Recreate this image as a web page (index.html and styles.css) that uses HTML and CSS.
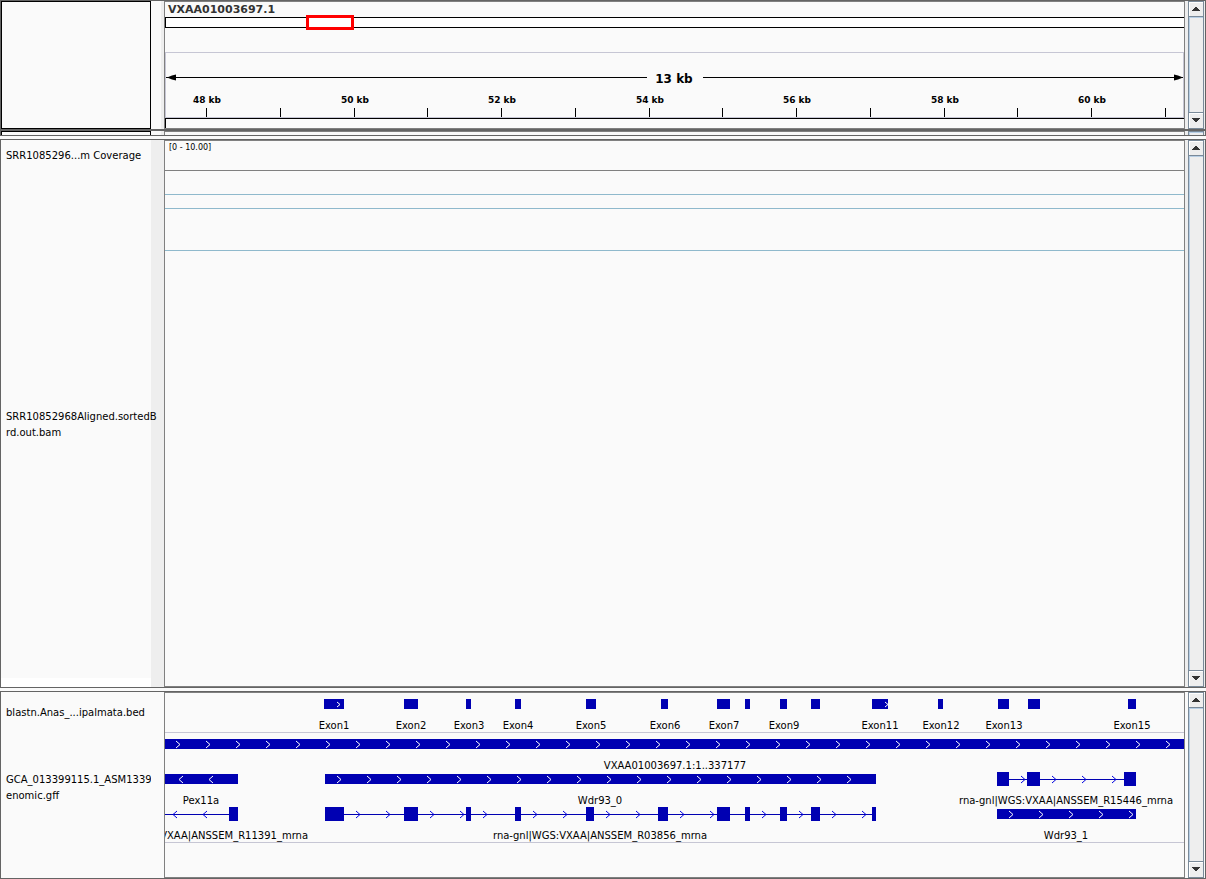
FILE: index.html
```html
<!DOCTYPE html>
<html lang="en">
<head>
<meta charset="utf-8">
<title>Genome viewer</title>
<link rel="stylesheet" href="styles.css">
</head>
<body>
<main class="viewer">
  <section class="panel header-panel">
    <div class="names boxed"></div>
    <div class="attributes narrow"></div>
    <div class="data">
      <div class="locus">VXAA01003697.1</div>
      <div class="ideogram"><div class="region"></div></div>
      <svg class="ruler" id="ruler"></svg>
      <div class="sequence"></div>
    </div>
    <div class="scrollbar">
      <button class="arrow" type="button" aria-label="Scroll up"><svg width="8" height="4"><path d="M3 0h2v1h1v1h1v1h1v1H0V3h1V2h1V1h1z"/></svg></button>
      <div class="rail"></div>
      <button class="arrow down" type="button" aria-label="Scroll down"><svg width="8" height="4"><path d="M0 0h8v1H7v1H6v1H5v1H3V3H2V2H1V1H0z"/></svg></button>
    </div>
  </section>
  <section class="panel sliver">
    <div class="names boxed"></div>
    <div class="attributes narrow"></div>
    <div class="data"></div>
    <div class="scrollbar"><div class="rail"></div></div>
  </section>
  <section class="panel reads-panel">
    <div class="names wide-text">
      <div class="name coverage">SRR1085296...m Coverage</div>
      <div class="name alignment">SRR10852968Aligned.sortedB<br>rd.out.bam</div>
      <div class="name-end"></div>
    </div>
    <div class="attributes"></div>
    <div class="data">
      <div class="coverage range">[0 - 10.00]</div>
      <div class="alignment splices">
        <div class="splice first"></div>
        <div class="splice second"></div>
        <div class="splice third"></div>
      </div>
    </div>
    <div class="scrollbar">
      <button class="arrow" type="button" aria-label="Scroll up"><svg width="8" height="4"><path d="M3 0h2v1h1v1h1v1h1v1H0V3h1V2h1V1h1z"/></svg></button>
      <div class="rail"></div>
      <button class="arrow down" type="button" aria-label="Scroll down"><svg width="8" height="4"><path d="M0 0h8v1H7v1H6v1H5v1H3V3H2V2H1V1H0z"/></svg></button>
    </div>
  </section>
  <section class="panel features-panel">
    <div class="names">
      <div class="name exons">blastn.Anas_...ipalmata.bed</div>
      <div class="name genes">GCA_013399115.1_ASM13399<br>enomic.gff</div>
    </div>
    <div class="attributes plain"></div>
    <div class="data">
      <svg class="track exons" id="exons"></svg>
      <svg class="track genes" id="genes"></svg>
    </div>
    <div class="scrollbar">
      <button class="arrow" type="button" aria-label="Scroll up"><svg width="8" height="4"><path d="M3 0h2v1h1v1h1v1h1v1H0V3h1V2h1V1h1z"/></svg></button>
      <div class="rail"></div>
      <button class="arrow down" type="button" aria-label="Scroll down"><svg width="8" height="4"><path d="M0 0h8v1H7v1H6v1H5v1H3V3H2V2H1V1H0z"/></svg></button>
    </div>
  </section>
</main>
<script src="tracks.js"></script>
</body>
</html>
```

FILE: styles.css
```css
* { box-sizing: border-box; }

body {
  margin: 0;
  background: #fafafa;
  color: #000;
  font: 10px/16px "DejaVu Sans", Verdana, sans-serif;
}

.viewer {
  display: flex;
  flex-direction: column;
  min-height: 100vh;
}

.panel {
  display: grid;
  grid-template-columns: 150px 13px minmax(0, 1fr) 17px;
  border: 1px solid #646464;
}

.sliver { height: 6px; }
.reads-panel { flex: 1; margin: 3px 0; }
.features-panel { height: 188px; }

.names {
  display: flex;
  flex-direction: column;
  padding-top: 1px;
  overflow: hidden;
}

.names.wide-text {
  z-index: 1;
  overflow: visible;
  background: #fafafa;
}

.boxed { border: 1px solid #000; }
.sliver .boxed { border-bottom: 0; }

.name {
  display: flex;
  flex-direction: column;
  justify-content: center;
  padding-left: 5px;
  white-space: nowrap;
}

.name br { display: block; }
.name-end { height: 9px; background: #fff; }

.attributes { background: #eee; }
.attributes.narrow { border-left: 10px solid #fafafa; }
.attributes.plain { background: none; }

.data {
  display: flex;
  flex-direction: column;
  min-width: 0;
  margin-right: 3px;
  border: 1px solid #808080;
}

.sliver .data { border-bottom: 0; }

.header-panel, .sliver, .reads-panel {
  background: linear-gradient(#eee, #eee) right / 24px 100% no-repeat;
}

.header-panel .data, .sliver .data, .reads-panel .data { background: #fafafa; }

.locus {
  height: 15px;
  padding-left: 3px;
  font-size: 11px;
  font-weight: bold;
  line-height: 15px;
  color: #333;
}

.ideogram {
  position: relative;
  height: 11px;
  border: 1px solid #000;
  border-right: 0;
  background: #fff;
}

.region {
  position: absolute;
  top: -3px;
  left: 13.8%;
  width: 48px;
  height: 15px;
  border: 3px solid #f00;
}

.ruler {
  width: 100%;
  height: 66px;
  margin-top: 24px;
  border: 1px solid #c6c6d4;
  font-size: 9px;
  font-weight: bold;
}

.ruler .span { font-size: 12px; }

.sequence {
  height: 10px;
  border-top: 1px solid #000;
  border-left: 1px solid #000;
}

.coverage { height: 30px; }

.range {
  padding-left: 4px;
  border-bottom: 1px solid #808080;
  font-size: 8px;
  line-height: 13px;
}

.alignment { flex: 1; }
.splices { padding-top: 23px; }
.splice { border-top: 1px solid #8fb9cc; }
.splice.first { height: 14px; }
.splice.second { height: 42px; }

.track {
  display: block;
  width: 100%;
  border-bottom: 1px solid #c6c6d4;
}

.exons { height: 40px; }
.genes { height: 110px; }

svg text { text-anchor: middle; }
.block { fill: #0000b2; }
.chevron { fill: none; stroke: #0000e0; }
.chevron.on-block { stroke: #fff; }

.scrollbar {
  display: flex;
  flex-direction: column;
  border: 1px solid #7a8a99;
  border-bottom: 0;
  margin-right: 1px;
  background: #eee;
}

.arrow {
  display: flex;
  align-items: center;
  justify-content: center;
  height: 15px;
  padding: 0;
  border: 0;
  border-bottom: 1px solid #7a8a99;
  background: #eee;
  box-shadow: inset 1px 1px #fff;
}

.arrow.down {
  height: 17px;
  padding-bottom: 2px;
  border-top: 1px solid #7a8a99;
}

.arrow svg { fill: #333; }

.rail {
  flex: 1;
  border-top: 1px solid #b8cfe5;
  border-left: 1px solid #b8cfe5;
}
```

FILE: tracks.js
```js
const NS = "http://www.w3.org/2000/svg";
const VIEW = 1019;

const exonBlocks = [
  [159, 20], [239, 14], [301, 5], [350, 6], [421, 10], [496, 7], [552, 13], [580, 5],
  [615, 7], [646, 9], [707, 16], [773, 5], [833, 11], [863, 12], [963, 8]
];
const exonLabels = [
  ["Exon1", 169], ["Exon2", 246], ["Exon3", 304], ["Exon4", 353], ["Exon5", 426],
  ["Exon6", 500], ["Exon7", 559], ["Exon9", 619], ["Exon11", 715], ["Exon12", 776],
  ["Exon13", 839], ["Exon15", 967]
];
const wdr93Exons = [
  [160, 19], [239, 14], [301, 5], [350, 6], [421, 8], [493, 10], [552, 13], [580, 5],
  [615, 7], [646, 9], [707, 4]
];

function painter(id) {
  const svg = document.getElementById(id);
  svg.replaceChildren();
  const scale = svg.parentElement.clientWidth / VIEW;
  const px = v => Math.round(v * scale);
  const add = (tag, attrs, text) => {
    const node = document.createElementNS(NS, tag);
    for (const key in attrs) node.setAttribute(key, attrs[key]);
    if (text) node.textContent = text;
    svg.append(node);
  };
  return {
    block(x, y, w, h) {
      add("rect", { class: "block", x: px(x), y, width: px(x + w) - px(x), height: h });
    },
    line(x1, x2, y, cls) {
      add("rect", { class: cls, x: px(x1), y, width: px(x2) - px(x1), height: 1 });
    },
    tick(x, y, h) { add("rect", { x: px(x), y, width: 1, height: h }); },
    shape(x, d) { add("path", { d, transform: `translate(${px(x)} 0)` }); },
    text(label, x, y, cls = "label") { add("text", { class: cls, x: px(x), y }, label); },
    chevrons(tips, y, cls = "", dir = 1, size = 4) {
      for (const tip of tips) {
        const back = px(tip) - size * dir;
        add("path", { class: "chevron " + cls, d: `M${back} ${y + 1 - size}L${px(tip)} ${y + 0.5}L${back} ${y + size}` });
      }
    }
  };
}

const every30 = (from, to) => {
  const out = [];
  for (let x = from; x <= to; x += 30) out.push(x);
  return out;
};

function drawRuler() {
  const p = painter("ruler");
  p.line(0, 481, 24);
  p.line(537, 1017, 24);
  p.shape(1, "M0 24.5L5 22.5L9 21.5V27.5L5 26.5Z");
  p.shape(1017, "M0 24.5L-5 22.5L-9 21.5V27.5L-5 26.5Z");
  p.text("13 kb", 508, 30, "span");
  for (let i = 0; i < 14; i++) {
    const x = 40 + i * 73.75;
    p.tick(x, 55, 9);
    if (i % 2 === 0) p.text(48 + i + " kb", x + 1, 50);
  }
}

function drawExons() {
  const p = painter("exons");
  for (const [x, w] of exonBlocks) p.block(x, 6, w, 10);
  p.chevrons([175, 723], 11, "on-block", 1, 3);
  for (const [label, x] of exonLabels) p.text(label, x, 36);
}

function drawGenes() {
  const p = painter("genes");
  p.block(0, 6, 1019, 10);
  p.chevrons(every30(15, 1010), 11, "on-block");
  p.text("VXAA01003697.1:1..337177", 510, 36);

  p.block(0, 41, 73, 10);
  p.chevrons([14, 44], 46, "on-block", -1);
  p.text("Pex11a", 36, 71);
  p.line(0, 64, 81, "block");
  p.chevrons([8, 38], 81, "", -1);
  p.block(64, 74, 9, 14);
  p.text("rna-gnl|WGS:VXAA|ANSSEM_R11391_mrna", 36, 106);

  p.block(160, 41, 551, 10);
  p.chevrons(every30(176, 700), 46, "on-block");
  p.text("Wdr93_0", 435, 71);
  p.line(160, 711, 81, "block");
  p.chevrons([195, 225, 269, 299, 322, 372, 402, 445, 475, 519, 549, 601, 638, 671, 701], 81);
  for (const [x, w] of wdr93Exons) p.block(x, 74, w, 14);
  p.text("rna-gnl|WGS:VXAA|ANSSEM_R03856_mrna", 435, 106);

  p.line(832, 971, 46, "block");
  p.chevrons([860, 891, 921, 951], 46);
  for (const [x, w] of [[832, 12], [862, 13], [959, 12]]) p.block(x, 39, w, 14);
  p.text("rna-gnl|WGS:VXAA|ANSSEM_R15446_mrna", 901, 71);
  p.block(832, 76, 139, 10);
  p.chevrons(every30(848, 970), 81, "on-block");
  p.text("Wdr93_1", 901, 106);
}

function draw() {
  drawRuler();
  drawExons();
  drawGenes();
}

draw();
window.addEventListener("resize", draw);
```
